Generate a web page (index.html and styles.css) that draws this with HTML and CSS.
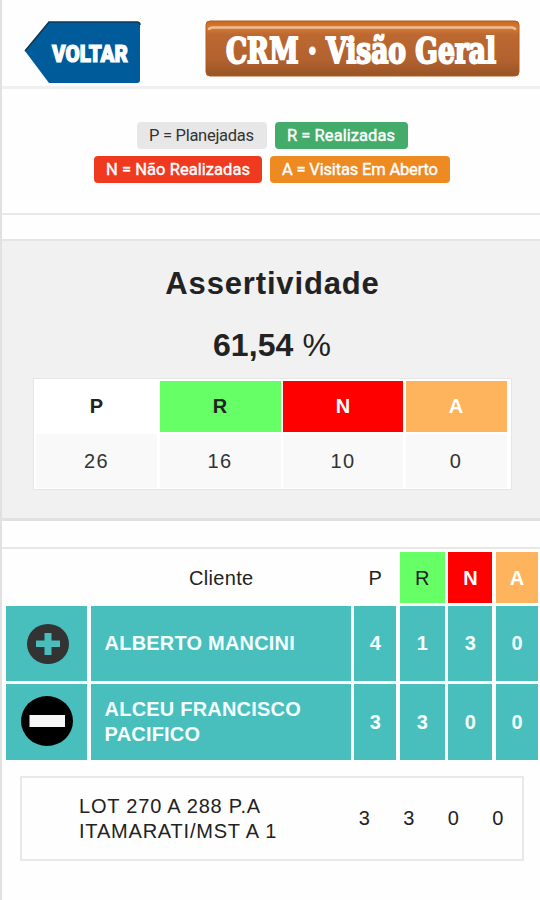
FILE: index.html
```
<!DOCTYPE html>
<html lang="pt-BR">
<head>
<meta charset="utf-8">
<title>CRM · Visão Geral</title>
<link rel="stylesheet" href="styles.css">
</head>
<body>
<div class="page">
  <header class="header">
    <svg class="back" width="118" height="64" viewBox="0 0 118 64" role="img" aria-label="Voltar">
      <path d="M1 31 L25 2 H113 Q116 2 116 5 V60 Q116 63 113 63 H25 Z" fill="#005b9a"/>
      <path d="M1 31 L25 2 H113 Q116 2 116 5" fill="none" stroke="#10364f" stroke-width="1.5"/>
      <text class="back-text" x="28" y="41.500" textLength="76" lengthAdjust="spacingAndGlyphs">VOLTAR</text>
    </svg>
    <svg class="title" width="316" height="58" viewBox="0 0 316 58" role="img" aria-label="CRM · Visão Geral">
      <defs>
        <linearGradient id="wood" x1="0" y1="0" x2="0" y2="1">
          <stop offset="0" stop-color="#c9681d"/>
          <stop offset=".12" stop-color="#d47b38"/>
          <stop offset=".25" stop-color="#bc6831"/>
          <stop offset=".7" stop-color="#b3622f"/>
          <stop offset="1" stop-color="#985425"/>
        </linearGradient>
      </defs>
      <rect x="1" y="1" width="313" height="55" rx="4" fill="url(#wood)" stroke="#b25c20"/>
      <path d="M4 10 Q4 7.500 8 7.500 H306 Q310 7.500 310 10" fill="none" stroke="#efbd94" stroke-width="2.500"/>
      <text class="title-text" x="21" y="43" textLength="270" lengthAdjust="spacingAndGlyphs">CRM · Visão Geral</text>
    </svg>
  </header>

  <section class="legend">
    <div class="legend-row">
      <span class="badge badge-p"><svg width="106" height="20"><text x="0" y="15.500" textLength="105">P = Planejadas</text></svg></span>
      <span class="badge badge-r"><svg width="109" height="20"><text x="0" y="15.500" textLength="108">R = Realizadas</text></svg></span>
    </div>
    <div class="legend-row">
      <span class="badge badge-n"><svg width="144" height="20"><text x="0" y="15.500" textLength="144">N = Não Realizadas</text></svg></span>
      <span class="badge badge-a"><svg width="156" height="20"><text x="0" y="15.500" textLength="156">A = Visitas Em Aberto</text></svg></span>
    </div>
  </section>

  <section class="summary">
    <h1 class="heading">Assertividade</h1>
    <p class="percent">61,54 <span>%</span></p>
    <div class="totals">
      <div class="cell head">P</div>
      <div class="cell head green">R</div>
      <div class="cell head red">N</div>
      <div class="cell head orange">A</div>
      <div class="cell value">26</div>
      <div class="cell value">16</div>
      <div class="cell value">10</div>
      <div class="cell value">0</div>
    </div>
  </section>

  <section class="clients">
    <div class="grid">
      <div class="th client-head">Cliente</div>
      <div class="th">P</div>
      <div class="th green">R</div>
      <div class="th red">N</div>
      <div class="th orange">A</div>

      <div class="td"><svg class="plus" width="42" height="40" viewBox="0 0 42 40"><ellipse cx="21" cy="20" rx="21" ry="20" fill="#333"/><path d="M17.500 9h7v7.500h8.500v6.500h-8.500V31h-7v-8h-8.500v-6.500h8.500z" fill="#49bebd"/></svg></div>
      <div class="td name">ALBERTO MANCINI</div>
      <div class="td">4</div>
      <div class="td">1</div>
      <div class="td">3</div>
      <div class="td">0</div>

      <div class="td minus"><svg width="52" height="50" viewBox="0 0 52 50"><ellipse cx="26" cy="25" rx="26" ry="25" fill="#000"/><path d="M8.500 19h35.500v12H8.500z" fill="#f7f7f7"/></svg></div>
      <div class="td name">ALCEU FRANCISCO<br>PACIFICO</div>
      <div class="td">3</div>
      <div class="td">3</div>
      <div class="td">0</div>
      <div class="td">0</div>
    </div>
    <div class="detail">
      <div class="place"><span>LOT 270 A 288 P.A</span><span>ITAMARATI/MST A 1</span></div>
      <div class="num">3</div>
      <div class="num">3</div>
      <div class="num">0</div>
      <div class="num">0</div>
    </div>
  </section>
</div>
</body>
</html>
```
FILE: styles.css
```
* { box-sizing: border-box; }

body {
  margin: 0;
  background: #fefefe;
  color: #222;
  font-family: "Liberation Sans", Arial, sans-serif;
  font-size: 20px;
}

.page {
  height: 900px;
  border-left: 2px solid #e1e1e1;
  overflow: hidden;
}

.header {
  height: 89px;
  display: flex;
  justify-content: space-between;
  align-items: flex-start;
  padding: 20px 19px 0 22px;
  border-bottom: 3px solid #f0f0f0;
}

.header svg { overflow: visible; }

.back-text {
  font: 900 23px "Roboto", sans-serif;
  fill: #fff;
  stroke: #fff;
  stroke-width: 1.2px;
}

.title-text {
  font: bold 35px "DejaVu Serif Condensed", "DejaVu Serif", serif;
  fill: #fff;
  stroke: #fff;
  stroke-width: 2px;
}

.legend {
  height: 126px;
  padding-top: 33px;
  border-bottom: 2px solid #e8e8e8;
}

.legend-row {
  display: flex;
  justify-content: center;
  gap: 8px;
  margin-bottom: 7px;
  padding-left: 2px;
}

.badge {
  height: 27px;
  padding: 3px 12px;
  border-radius: 4px;
}

.badge svg { display: block; overflow: visible; }

.badge text {
  font: 16.500px "Roboto", sans-serif;
  fill: #fff;
  stroke: #fff;
  stroke-width: .4px;
}

.badge-p { background: #e7e7e7; }
.badge-p text { fill: #333; stroke: none; }
.badge-r { background: #43ac6a; }
.badge-n { background: #f03a20; }
.badge-a { background: #ee8a22; }

.summary {
  margin-top: 24px;
  height: 282px;
  padding-top: 24px;
  background: #f1f1f1;
  border-top: 2px solid #e5e5e5;
  border-bottom: 3px solid #e1e1e1;
}

.heading {
  margin: 0;
  height: 38px;
  line-height: 38px;
  padding-left: 3px;
  text-align: center;
  font-size: 31px;
  letter-spacing: .85px;
}

.percent {
  margin: 23px 0 0;
  padding-left: 2px;
  height: 38px;
  line-height: 38px;
  text-align: center;
  font-size: 32px;
  font-weight: bold;
  letter-spacing: .1px;
}

.percent span { font-weight: normal; }

.totals {
  display: grid;
  grid-template-columns: 121px 121px 120px 101px;
  grid-template-rows: 51px 54px;
  column-gap: 2.500px;
  row-gap: 2px;
  width: 479px;
  height: 112px;
  margin: 14px 0 0 31px;
  padding: 2px 3px 0 2px;
  background: #fff;
  border: 1px solid #e6e6e6;
}

.cell {
  display: flex;
  align-items: center;
  justify-content: center;
}

.head { font-weight: bold; }
.value { background: #f9f9f9; letter-spacing: 1.5px; color: #333; }

.green { background: #6f6; color: #222; }
.red { background: #f00; color: #fff; font-weight: bold; }
.orange { background: #fdb45c; color: #fff; font-weight: bold; }

.clients {
  margin-top: 26px;
  border-top: 2px solid #e8e8e8;
  padding-top: 3px;
}

.grid {
  display: grid;
  grid-template-columns: 81px 260px 42px 45px 44px 42px;
  grid-template-rows: 51px 75px 76px;
  column-gap: 3.600px;
  row-gap: 3px;
  margin-left: 4px;
}

.th, .td {
  display: flex;
  align-items: center;
  justify-content: center;
}

.th { padding-top: 1px; }

.client-head {
  grid-column: span 2;
  padding-left: 86px;
  letter-spacing: .3px;
}

.td {
  background: #48bebd;
  color: #f4ffff;
  font-weight: bold;
}

.plus { margin-left: 3px; }
.minus { padding-bottom: 3px; }

.name {
  justify-content: flex-start;
  padding-left: 14px;
  line-height: 25px;
  letter-spacing: .2px;
}

.detail {
  display: grid;
  grid-template-columns: 1fr 44.500px 44.500px 44.500px 44.500px;
  align-items: center;
  width: 504px;
  height: 85px;
  margin: 16px 0 0 18px;
  padding: 0 2px 0 57px;
  border: 2px solid #e9e9e9;
  line-height: 25px;
}

.place {
  display: flex;
  flex-direction: column;
  letter-spacing: .8px;
}

.num { text-align: center; }
```
